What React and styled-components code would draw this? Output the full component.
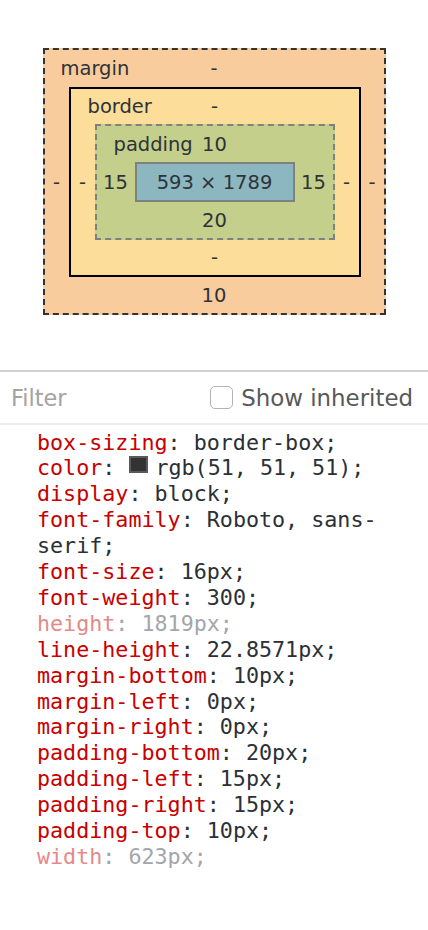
import React from "react";
import styled, { createGlobalStyle } from "styled-components";

const Global = createGlobalStyle`
  html, body { margin: 0; padding: 0; background: #fff; }
  body { width: 428px; height: 930px; overflow: hidden; }
`;

const Page = styled.div`
  width: 428px;
  height: 930px;
  background: #fff;
  font-family: "DejaVu Sans", sans-serif;
`;

const BoxModel = styled.section`
  height: 370px;
  box-sizing: border-box;
  padding-top: 48px;
  display: flex;
  justify-content: center;
  align-items: flex-start;
  font-family: "DejaVu Sans", sans-serif;
  font-size: 19.5px;
  color: #2e3339;
`;

const Layer = styled.div`
  display: grid;
  grid-template-columns: ${(p) => p.$cols};
  grid-template-rows: ${(p) => p.$rows};
  border: 2px ${(p) => p.$line} ${(p) => p.$lineColor};
  background: ${(p) => p.$bg};
`;

const Top = styled.div`
  grid-row: 1;
  grid-column: 1 / -1;
  display: flex;
  align-items: center;
  justify-content: center;
`;

const Label = styled.div`
  grid-row: 1;
  grid-column: 1 / -1;
  justify-self: start;
  align-self: center;
  padding-left: ${(p) => p.$indent}px;
`;

const Bottom = styled.div`
  grid-row: 3;
  grid-column: 1 / -1;
  display: flex;
  align-items: center;
  justify-content: center;
`;

const Side = styled.div`
  grid-row: 2;
  grid-column: ${(p) => (p.$right ? 3 : 1)};
  display: flex;
  align-items: center;
  justify-content: center;
`;

const Middle = styled.div`
  grid-row: 2;
  grid-column: 2;
`;

const Content = styled.div`
  width: 160px;
  height: 40px;
  box-sizing: border-box;
  border: 2px solid #808080;
  background: #8cb6c0;
  display: flex;
  align-items: center;
  justify-content: center;
`;

const FilterBar = styled.div`
  height: 51px;
  border-top: 2px solid #d2d2d2;
  border-bottom: 2px solid #ececec;
  display: flex;
  align-items: center;
  justify-content: space-between;
  padding: 0 15px 0 11px;
  font-family: "DejaVu Sans", sans-serif;
  font-size: 22.4px;
`;

const FilterText = styled.span`
  color: #a3a3a3;
`;

const Inherit = styled.label`
  display: flex;
  align-items: center;
  gap: 8px;
  color: #585858;
  font-size: 22.9px;
`;

const Check = styled.span`
  width: 23px;
  height: 23px;
  box-sizing: border-box;
  border: 1.5px solid #b3b3b3;
  border-radius: 5px;
  background: #fff;
`;

const Rules = styled.div`
  padding: 4.5px 0 0 37px;
  font-family: "DejaVu Sans Mono", monospace;
  font-size: 21.7px;
  line-height: 25.9px;
`;

const Decl = styled.div`
  color: ${(p) => (p.$faded ? "#a3a6aa" : "#2b3037")};
`;

const Prop = styled.span`
  color: ${(p) => (p.$faded ? "#e48a8a" : "#c80000")};
`;

const Swatch = styled.span`
  display: inline-block;
  width: 19px;
  height: 17px;
  box-sizing: border-box;
  border: 2px solid #5a5a5a;
  background: #333333;
  margin: 0 7px 0 1px;
  vertical-align: 2px;
`;

const decls = [
  ["box-sizing", "border-box"],
  ["color", "rgb(51, 51, 51)", true],
  ["display", "block"],
  ["font-family", "Roboto, sans-serif"],
  ["font-size", "16px"],
  ["font-weight", "300"],
  ["height", "1819px", false, true],
  ["line-height", "22.8571px"],
  ["margin-bottom", "10px"],
  ["margin-left", "0px"],
  ["margin-right", "0px"],
  ["padding-bottom", "20px"],
  ["padding-left", "15px"],
  ["padding-right", "15px"],
  ["padding-top", "10px"],
  ["width", "623px", false, true],
];

export default function App() {
  return (
    <Page>
      <Global />
      <BoxModel>
        <Layer
          $cols="24px auto 23px"
          $rows="37px auto 36px"
          $line="dashed"
          $lineColor="#333"
          $bg="#f9cc9d"
        >
          <Label $indent={16}>margin</Label>
          <Top>-</Top>
          <Side>-</Side>
          <Middle>
            <Layer
              $cols="24px auto 24px"
              $rows="35px auto 35px"
              $line="solid"
              $lineColor="#000"
              $bg="#fcdd9a"
            >
              <Label $indent={17}>border</Label>
              <Top>-</Top>
              <Side>-</Side>
              <Middle>
                <Layer
                  $cols="38px auto 38px"
                  $rows="36px auto 36px"
                  $line="dashed"
                  $lineColor="#808080"
                  $bg="#c3cf8a"
                >
                  <Label $indent={17}>padding</Label>
                  <Top>10</Top>
                  <Side>15</Side>
                  <Middle>
                    <Content>593 × 1789</Content>
                  </Middle>
                  <Side $right>15</Side>
                  <Bottom>20</Bottom>
                </Layer>
              </Middle>
              <Side $right>-</Side>
              <Bottom>-</Bottom>
            </Layer>
          </Middle>
          <Side $right>-</Side>
          <Bottom>10</Bottom>
        </Layer>
      </BoxModel>
      <FilterBar>
        <FilterText>Filter</FilterText>
        <Inherit>
          <Check />
          Show inherited
        </Inherit>
      </FilterBar>
      <Rules>
        {decls.map(([name, value, swatch, faded]) => (
          <Decl key={name} $faded={faded}>
            <Prop $faded={faded}>{name}</Prop>: {swatch && <Swatch />}
            {value};
          </Decl>
        ))}
      </Rules>
    </Page>
  );
}
